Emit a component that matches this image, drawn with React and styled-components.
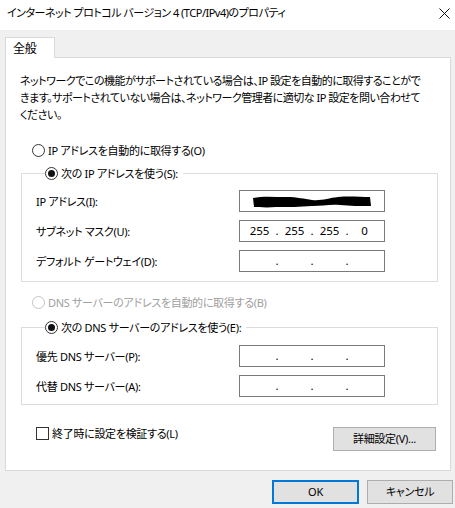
import React from "react";
import styled, { createGlobalStyle } from "styled-components";

const Global = createGlobalStyle`
  html, body {
    margin: 0;
    padding: 0;
    background: #f0f0f0;
  }
  body {
    font-family: "Noto Sans", "Noto Sans CJK JP", sans-serif;
    font-size: 11px;
    letter-spacing: -0.3px;
    color: #000;
    font-feature-settings: "palt";
  }
`;

const Window = styled.div`
  width: 455px;
  height: 508px;
  background: #f0f0f0;
  display: flex;
  flex-direction: column;
  overflow: hidden;
`;

const TitleBar = styled.div`
  height: 30px;
  box-sizing: border-box;
  background: #fff;
  display: flex;
  align-items: center;
  justify-content: space-between;
  padding: 0 5px 4px 7px;
  line-height: 16px;
  letter-spacing: -0.5px;
`;

const Body = styled.div`
  padding: 7px 0 0 5px;
  display: flex;
  flex-direction: column;
`;

const TabStrip = styled.div`
  display: flex;
  margin-bottom: -1px;
  position: relative;
  z-index: 1;
`;

const Tab = styled.div`
  width: 50px;
  height: 21px;
  box-sizing: border-box;
  background: #fff;
  border: 1px solid #d9d9d9;
  border-bottom: none;
  padding: 2px 0 0 7px;
  line-height: 17px;
  font-size: 12px;
`;

const Panel = styled.div`
  width: 446px;
  height: 414px;
  box-sizing: border-box;
  background: #fff;
  border: 1px solid #d9d9d9;
  padding: 14px 12px 0 15px;
  display: flex;
  flex-direction: column;
`;

const Intro = styled.p`
  margin: 0 0 0 -1px;
  line-height: 17px;
  white-space: nowrap;
  letter-spacing: -0.5px;
`;

const RadioRow = styled.label`
  display: flex;
  align-items: center;
  gap: 3px;
  height: 17px;
  line-height: 17px;
  margin-left: ${(p) => p.$indent || 0}px;
  margin-top: ${(p) => p.$top || 0}px;
  color: ${(p) => (p.$disabled ? "#a0a0a0" : "#000")};
  white-space: nowrap;
`;

const RadioDot = styled.span`
  width: 13px;
  height: 13px;
  box-sizing: border-box;
  border-radius: 50%;
  border: 1px solid ${(p) => (p.$disabled ? "#c4c4c4" : "#333")};
  background: #fff;
  display: flex;
  align-items: center;
  justify-content: center;
  flex: none;
  &::after {
    content: "";
    width: 7px;
    height: 7px;
    border-radius: 50%;
    background: #111;
    display: ${(p) => (p.$checked ? "block" : "none")};
  }
`;

const Group = styled.fieldset`
  margin: ${(p) => p.$top}px 0 0 0;
  padding: ${(p) => p.$padTop}px 52px ${(p) => p.$padBottom}px 14px;
  border: 1px solid #dcdcdc;
  min-width: 0;
  display: flex;
  flex-direction: column;
  gap: 8px;
`;

const Legend = styled.legend`
  padding: 0 5px 0 0;
  margin-left: 9px;
  background: #fff;
`;

const FieldRow = styled.div`
  display: flex;
  align-items: center;
  justify-content: space-between;
  height: 22px;
  white-space: nowrap;
`;

const IpBox = styled.div`
  width: 146px;
  height: 22px;
  box-sizing: border-box;
  border: 1px solid #7a7a7a;
  background: #fff;
  display: flex;
  align-items: center;
  padding-left: ${(p) => (p.$redacted ? 12 : 4)}px;
  font-size: 11.5px;
  letter-spacing: 0;
`;

const Octet = styled.span`
  width: 31px;
  text-align: center;
  line-height: 16px;
`;

const Dot = styled.span`
  width: 4px;
  text-align: center;
  line-height: 16px;
`;

const BottomRow = styled.div`
  display: flex;
  justify-content: space-between;
  align-items: flex-start;
  margin-top: 21px;
  padding: 0 2px 0 15px;
`;

const CheckRow = styled.label`
  display: flex;
  align-items: center;
  gap: 3px;
  height: 17px;
  line-height: 17px;
  margin-top: -1px;
`;

const CheckBox = styled.span`
  width: 13px;
  height: 13px;
  box-sizing: border-box;
  border: 1px solid #333;
  background: #fff;
`;

const Button = styled.button`
  font: inherit;
  letter-spacing: inherit;
  color: #000;
  height: 24px;
  width: ${(p) => p.$w}px;
  box-sizing: border-box;
  background: #e1e1e1;
  border: ${(p) => (p.$default ? "2px solid #0078d7" : "1px solid #adadad")};
  padding: 0;
  line-height: 16px;
  margin-top: ${(p) => p.$top || 0}px;
`;

const Footer = styled.div`
  display: flex;
  justify-content: flex-end;
  gap: 8px;
  padding: 9px 2px 0 0;
`;

const Redaction = () => (
  <svg width="120" height="15" viewBox="0 0 120 15">
    <path
      d="M1 4 C10 2 22 3 34 3 C46 3 52 5 60 6 C70 7 76 4 86 3 C98 2 108 3 118 3 L119 12 C108 12 98 12 88 11 C78 10 70 12 60 12 C48 13 36 13 24 13 C14 14 6 13 2 13 Z"
      fill="#000"
    />
  </svg>
);

const IpField = ({ values, redacted }) => (
  <IpBox $redacted={redacted}>
    {redacted ? (
      <Redaction />
    ) : (
      <>
        <Octet>{values[0]}</Octet>
        <Dot>.</Dot>
        <Octet>{values[1]}</Octet>
        <Dot>.</Dot>
        <Octet>{values[2]}</Octet>
        <Dot>.</Dot>
        <Octet>{values[3]}</Octet>
      </>
    )}
  </IpBox>
);

const empty = ["", "", "", ""];

export default function App() {
  return (
    <Window>
      <Global />
      <TitleBar>
        <span>インターネット プロトコル バージョン 4 (TCP/IPv4)のプロパティ</span>
        <svg width="11" height="11" viewBox="0 0 11 11">
          <path d="M0.5 0.5 L10.5 10.5 M10.5 0.5 L0.5 10.5" stroke="#111" strokeWidth="1" />
        </svg>
      </TitleBar>
      <Body>
        <TabStrip>
          <Tab>全般</Tab>
        </TabStrip>
        <Panel>
          <Intro>
            ネットワークでこの機能がサポートされている場合は、IP 設定を自動的に取得することがで
            <br />
            きます。サポートされていない場合は、ネットワーク管理者に適切な IP 設定を問い合わせて
            <br />
            ください。
          </Intro>

          <RadioRow $indent={11} $top={19}>
            <RadioDot />
            IP アドレスを自動的に取得する(O)
          </RadioRow>

          <Group $top={6} $padTop={8} $padBottom={9}>
            <Legend>
              <RadioRow>
                <RadioDot $checked />
                次の IP アドレスを使う(S):
              </RadioRow>
            </Legend>
            <FieldRow>
              IP アドレス(I):
              <IpField redacted />
            </FieldRow>
            <FieldRow>
              サブネット マスク(U):
              <IpField values={["255", "255", "255", "0"]} />
            </FieldRow>
            <FieldRow>
              デフォルト ゲートウェイ(D):
              <IpField values={empty} />
            </FieldRow>
          </Group>

          <RadioRow $indent={11} $top={12} $disabled>
            <RadioDot $disabled />
            DNS サーバーのアドレスを自動的に取得する(B)
          </RadioRow>

          <Group $top={8} $padTop={9} $padBottom={7}>
            <Legend>
              <RadioRow>
                <RadioDot $checked />
                次の DNS サーバーのアドレスを使う(E):
              </RadioRow>
            </Legend>
            <FieldRow>
              優先 DNS サーバー(P):
              <IpField values={empty} />
            </FieldRow>
            <FieldRow>
              代替 DNS サーバー(A):
              <IpField values={empty} />
            </FieldRow>
          </Group>

          <BottomRow>
            <CheckRow>
              <CheckBox />
              終了時に設定を検証する(L)
            </CheckRow>
            <Button $w={103} $top={1}>
              詳細設定(V)...
            </Button>
          </BottomRow>
        </Panel>
        <Footer>
          <Button $w={87} $default>
            OK
          </Button>
          <Button $w={86}>キャンセル</Button>
        </Footer>
      </Body>
    </Window>
  );
}
